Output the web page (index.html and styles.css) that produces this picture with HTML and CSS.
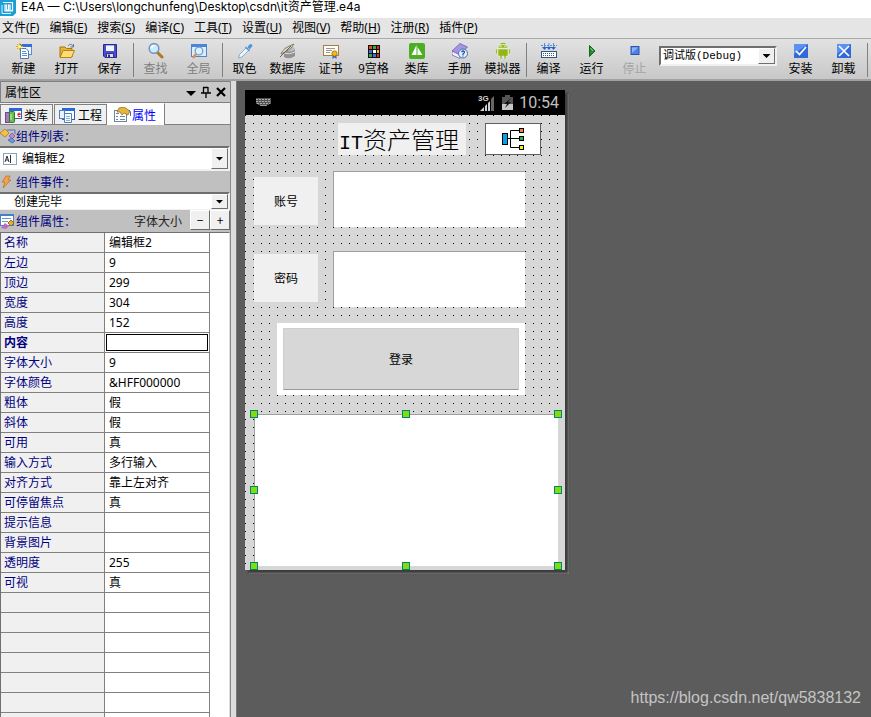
FILE: index.html
```html
<!DOCTYPE html>
<html lang="zh-CN">
<head>
<meta charset="utf-8">
<title>E4A</title>
<link rel="stylesheet" href="styles.css">
</head>
<body>
<header class="titlebar">
  <svg class="logo" width="16" height="16" viewBox="0 0 16 16"><path d="M0 0H16V13L13 16H0Z" fill="#1b9fd6"/><path d="M3 2.500H12.500V10.500H10V5H8.500V10H6.500V5H5V11H13" fill="none" stroke="#fff" stroke-width="1.200"/><path d="M2 5V13.500H11" fill="none" stroke="#d5f2ff"/></svg>
  <span>E4A — C:\Users\longchunfeng\Desktop\csdn\it资产管理.e4a</span>
</header>
<nav class="menubar">
  <a href="#">文件(<u>F</u>)</a><a href="#">编辑(<u>E</u>)</a><a href="#">搜索(<u>S</u>)</a><a href="#">编译(<u>C</u>)</a><a href="#">工具(<u>T</u>)</a><a href="#">设置(<u>U</u>)</a><a href="#">视图(<u>V</u>)</a><a href="#">帮助(<u>H</u>)</a><a href="#">注册(<u>R</u>)</a><a href="#">插件(<u>P</u>)</a>
</nav>
<div class="toolbar">
  <button class="tool"><svg viewBox="0 0 16 16"><rect x="4.500" y="1.500" width="11" height="10" fill="#eef5ff" stroke="#5b8ad0"/><path d="M4 1H16V4H4Z" fill="#3a6fd0"/><path d="M4.500 5.500H10L12.500 8V15.500H4.500Z" fill="#fff" stroke="#5577aa"/><path d="M6 8.500H10M6 10.500H11M6 12.500H11" stroke="#5c8fdc"/><path d="M3.500 0V7M0 3.500H7M1 1L6 6M6 1L1 6" stroke="#e6b400"/><circle cx="3.500" cy="3.500" r="1.500" fill="#fff6a8"/></svg>新建</button>
  <button class="tool"><svg viewBox="0 0 16 16"><path d="M1 14V4H6L7.500 5.500H13V14Z" fill="#e9b23a" stroke="#a97408"/><path d="M1 14.500L4 7.500H15.500L12.500 14.500Z" fill="#ffdd75" stroke="#b98210"/><path d="M9 3C11 .5 13 1 14 3.500M14.500 1V4H11.500" fill="none" stroke="#5b7896"/></svg>打开</button>
  <button class="tool"><svg viewBox="0 0 16 16"><path d="M1.500 1.500H14.500V14.500H3L1.500 13Z" fill="#4a4fd0" stroke="#28288f"/><path d="M4 2H12V8H4Z" fill="#f2f4ff"/><path d="M4 2H12V3H4Z" fill="#9cb2f0"/><path d="M4.500 10.500H11.500V14.500H4.500Z" fill="#dfe1ea" stroke="#30308a"/><path d="M6 11.500H8V14H6Z" fill="#30308a"/></svg>保存</button>
  <span class="sep"></span>
  <button class="tool" disabled><svg viewBox="0 0 16 16"><path d="M9 9L14 14" stroke="#b07828" stroke-width="3" stroke-linecap="round"/><circle cx="6" cy="5.500" r="4.800" fill="#cfeaff" stroke="#7295bb" stroke-width="1.500"/><path d="M3.500 5Q4 2.500 6.500 2.500" fill="none" stroke="#fff" stroke-width="1.500"/></svg>查找</button>
  <button class="tool" disabled><svg viewBox="0 0 16 16"><rect x=".5" y="1.500" width="15" height="12" fill="#dcebfd" stroke="#5384ca"/><path d="M0 1H16V4H0Z" fill="#4b83d8"/><circle cx="8" cy="8" r="3.800" fill="#d7f1ff" stroke="#7a9fc0" stroke-width="1.300"/><path d="M5 11L2 15" stroke="#d2905c" stroke-width="2.500"/></svg>全局</button>
  <span class="sep"></span>
  <button class="tool"><svg viewBox="0 0 16 16"><path d="M1.500 15L2.500 11.500L9 5L11.500 7.500L5 14Z" fill="#eaf6ff" stroke="#8babc3"/><path d="M8.500 4L12.500 8" stroke="#5b93d0" stroke-width="1.500"/><path d="M10.500 4L12.500 1.500Q15 0 15.500 3L12.500 6.500Z" fill="#4c94dc"/></svg>取色</button>
  <button class="tool"><svg viewBox="0 0 16 16"><path d="M4 6V14Q9 17 15 13V6Z" fill="#929292"/><ellipse cx="9.500" cy="6" rx="5.500" ry="2.500" fill="#bdbdbd"/><path d="M4 10Q9 12 15 9" stroke="#ddd" fill="none"/><path d="M1 11Q3 5 14 1Q12 6 5 9Z" fill="#dddccb" stroke="#6c695e" stroke-width=".8"/><path d="M0 14L11 3" stroke="#77603f"/></svg>数据库</button>
  <button class="tool"><svg viewBox="0 0 16 16"><rect x=".5" y="2.500" width="15" height="10" fill="#fffef6" stroke="#a87b43"/><path d="M3 5.500H12M3 7.500H9M3 9.500H7" stroke="#999"/><path d="M9.500 11V16L11.500 14.500L13.500 16V11" fill="#256dbb"/><circle cx="11.500" cy="10.500" r="2.600" fill="#f4b91f" stroke="#b97800"/></svg>证书</button>
  <button class="tool"><svg viewBox="0 0 16 16"><path d="M2 2H14V15H2Z" fill="#111"/><path d="M3 3H6V6H3Z" fill="#e84d20"/><path d="M7 3H10V6H7ZM3 11H6V14H3Z" fill="#37ad3d"/><path d="M11 3H13V6H11ZM11 11H13V14H11Z" fill="#e32c25"/><path d="M3 7H6V10H3ZM7 11H10V14H7Z" fill="#3c73de"/><path d="M7 7H10V10H7Z" fill="#fff"/><path d="M11 7H13V10H11Z" fill="#f4c51b"/></svg>9宫格</button>
  <button class="tool"><svg viewBox="0 0 16 16"><rect x="0" y="0" width="16" height="16" rx="2" fill="#4cae22"/><path d="M7.500 2V12H2.500ZM8.500 4L13.500 12H8.500Z" fill="#fff"/></svg>类库</button>
  <button class="tool"><svg viewBox="0 0 16 16"><path d="M0 8L8 .5L15.500 4L8 12Z" fill="#a696e1" stroke="#6655aa" stroke-width=".7"/><path d="M0 8V12L8 15.500V12Z" fill="#f3efff" stroke="#6655aa" stroke-width=".7"/><circle cx="11" cy="10.500" r="4.500" fill="#e2f1ff" stroke="#436eb5"/><path d="M9.500 9Q11 7 12.500 9Q12.500 10 11 11V12" fill="none" stroke="#2858a3" stroke-width="1.300"/><path d="M10.400 13H11.600" stroke="#2858a3"/></svg>手册</button>
  <button class="tool"><svg viewBox="0 0 16 16"><path d="M5 0L6 2Q8 1 10 2L11 0M3 5Q4 1.500 8 1.500Q12 1.500 13 5ZM3 6H13V13H11V16H9V13H7V16H5V13H3ZM.5 6H2.300V11H.5ZM13.700 6H15.500V11H13.700Z" fill="#92b51a" stroke="#f4f8df" stroke-width=".5"/><path d="M5.500 3.500H6.500M9.500 3.500H10.500" stroke="#fff"/></svg>模拟器</button>
  <span class="sep"></span>
  <button class="tool"><svg viewBox="0 0 16 16"><path d="M3.500 0V5M8 0V5M12.500 0V5M0 2.500H16" stroke="#5e8bc9" stroke-dasharray="2 1"/><path d="M1 4H6L3.500 7ZM5.500 4H10.500L8 7ZM10 4H15L12.500 7Z" fill="#2365d1"/><rect x=".5" y="8.500" width="15" height="6" fill="#fff" stroke="#365583"/><path d="M2 10.500H14M2 12.500H14" stroke="#365583" stroke-dasharray="1 1"/></svg>编译</button>
  <button class="tool"><svg viewBox="0 0 16 16"><path d="M5.500 2.500L11 8L5.500 13.500Z" fill="#238c2c" stroke="#17651d"/><path d="M6.500 5L9 8" stroke="#8ed388"/></svg>运行</button>
  <button class="tool pale" disabled><svg viewBox="0 0 16 16"><rect x="4" y="3.500" width="8" height="8" fill="#4c82e8" stroke="#2856a8"/><path d="M5 4.500H11L5 10Z" fill="#8db3fa"/></svg>停止</button>
  <div class="combo build"><select aria-label="编译版本"><option>调试版(Debug)</option></select><i></i></div>
  <button class="tool"><svg viewBox="0 0 16 16"><path d="M1 1H15V15H1Z" fill="#316ad8"/><path d="M1 1H15L1 11Z" fill="#5b91f0"/><path d="M3 8L6.500 11.500L13 4" fill="none" stroke="#fff" stroke-width="1.700"/></svg>安装</button>
  <button class="tool"><svg viewBox="0 0 16 16"><path d="M1 1H15V15H1Z" fill="#316ad8"/><path d="M1 1H15L1 11Z" fill="#5b91f0"/><path d="M3 3L13 13M13 3L3 13" fill="none" stroke="#fff" stroke-width="1.700"/></svg>卸载</button>
  <span class="sep"></span>
</div>
<div class="main">
  <aside class="panel">
    <div class="panel-head"><span>属性区</span>
      <button aria-label="菜单"><svg width="10" height="12" viewBox="0 0 10 12"><path d="M0 5H10L5 10Z"/></svg></button>
      <button aria-label="固定"><svg width="10" height="12" viewBox="0 0 10 12"><path d="M2.500 1V6.500M2 1.500H7M7 1V7M0 7H10M5 7V12" fill="none" stroke="#000" stroke-width="1.300"/></svg></button>
      <button aria-label="关闭"><svg width="10" height="12" viewBox="0 0 10 12"><path d="M1 2L9 10M9 2L1 10" stroke="#000" stroke-width="2.200"/></svg></button>
    </div>
    <div class="tabs" role="tablist">
      <button role="tab" aria-selected="false"><svg width="17" height="16" viewBox="0 0 17 16"><rect x="4.500" y="1.500" width="12" height="10" fill="#fff" stroke="#315fbd"/><path d="M4 1H17V4H4Z" fill="#2868dc"/><path d="M13 7.500H15.500Q15 5.500 13.500 6Q12 8 13.500 9.500H15.500" fill="none" stroke="#e02020"/><rect x=".5" y="5.500" width="4" height="10" fill="#a776bd" stroke="#714785"/><rect x="4.500" y="4.500" width="5" height="11" rx="1" fill="#69bd50" stroke="#317a27"/><path d="M6 7V13" stroke="#c9f5b8"/></svg>类库</button>
      <button role="tab" aria-selected="false"><svg width="17" height="16" viewBox="0 0 17 16"><rect x="3.500" y="1.500" width="12" height="11" fill="#fff" stroke="#315fbd"/><path d="M3 1H16V4H3Z" fill="#2868dc"/><rect x=".5" y="3.500" width="5" height="8" fill="#e8f3ff" stroke="#527fb8"/><path d="M5.500 6.500H12.500V15.500H5.500Z" fill="#f7faff" stroke="#527fb8"/><path d="M7 9.500H11M7 11.500H11M7 13.500H11" stroke="#8baddc"/></svg>工程</button>
      <button role="tab" aria-selected="true" class="active"><svg width="17" height="16" viewBox="0 0 17 16"><rect x=".5" y="3.500" width="12" height="11" fill="#fff" stroke="#71869f"/><path d="M2 6.500H5M2 9.500H4M6 9.500H11M2 12.500H4M6 12.500H11" stroke="#6585aa"/><path d="M5 1L10 0L16 4L14 8L10 6L8 8L6 5H3Z" fill="#e4b73a" stroke="#8e6414" stroke-width=".7"/><path d="M15 3L16.500 5V9" fill="none" stroke="#446aa0"/></svg>属性</button>
    </div>
    <label class="section" for="components"><svg width="16" height="16" viewBox="0 0 16 16"><path d="M0 5L5 1L9 5L5 9Z" fill="#f4c240" stroke="#a17219" stroke-width=".7"/><path d="M7 2H15V6" fill="none" stroke="#4773b7"/><path d="M9 8L12 5L15 8L12 11Z" fill="#c883d9" stroke="#79498f" stroke-width=".7"/><path d="M8 12L12 10L15 13L12 15Z" fill="#5f9cec" stroke="#325f9e" stroke-width=".7"/></svg>组件列表：</label>
    <div class="combo comp"><svg class="field-icon" width="14" height="12" viewBox="0 0 14 12"><rect x=".5" y=".5" width="13" height="11" fill="#fff" stroke="#86a5c5"/><path d="M2 9L4 3L6 9M3 7H5M7.500 2V10" stroke="#333" fill="none"/></svg><select id="components"><option>编辑框2</option></select><i></i></div>
    <label class="section" for="events"><svg width="16" height="16" viewBox="0 0 16 16"><path d="M6 2H10L8 6H11L3 14L5 8H2Z" fill="#f3a344" stroke="#b76a31" stroke-width=".7"/></svg>组件事件：</label>
    <div class="combo event"><select id="events"><option>创建完毕</option></select><i></i></div>
    <div class="section props-head"><svg width="16" height="16" viewBox="0 0 16 16"><rect x=".5" y="1.500" width="13" height="11" fill="#fff" stroke="#5480bd"/><path d="M0 1H14V3H0Z" fill="#457dd1"/><path d="M2 5.500H11M2 8.500H8" stroke="#7395c1"/><path d="M1 15L5 10L9 13L6 16Z" fill="#bd69c7"/><path d="M8 10L11 7L14 10L11 13Z" fill="#e9ae35" stroke="#966916"/></svg><span>组件属性：</span><span class="size-label">字体大小</span><button>−</button><button>+</button></div>
    <div class="grid-wrap">
      <table class="props">
        <tbody>
        <tr><th scope="row">名称</th><td>编辑框2</td></tr>
        <tr><th scope="row">左边</th><td>9</td></tr>
        <tr><th scope="row">顶边</th><td>299</td></tr>
        <tr><th scope="row">宽度</th><td>304</td></tr>
        <tr><th scope="row">高度</th><td>152</td></tr>
        <tr class="current"><th scope="row"><label for="content">内容</label></th><td><input id="content" type="text"></td></tr>
        <tr><th scope="row">字体大小</th><td>9</td></tr>
        <tr><th scope="row">字体颜色</th><td>&amp;HFF000000</td></tr>
        <tr><th scope="row">粗体</th><td>假</td></tr>
        <tr><th scope="row">斜体</th><td>假</td></tr>
        <tr><th scope="row">可用</th><td>真</td></tr>
        <tr><th scope="row">输入方式</th><td>多行输入</td></tr>
        <tr><th scope="row">对齐方式</th><td>靠上左对齐</td></tr>
        <tr><th scope="row">可停留焦点</th><td>真</td></tr>
        <tr><th scope="row">提示信息</th><td></td></tr>
        <tr><th scope="row">背景图片</th><td></td></tr>
        <tr><th scope="row">透明度</th><td>255</td></tr>
        <tr><th scope="row">可视</th><td>真</td></tr>
        <tr><th></th><td></td></tr><tr><th></th><td></td></tr><tr><th></th><td></td></tr><tr><th></th><td></td></tr><tr><th></th><td></td></tr><tr><th></th><td></td></tr><tr><th></th><td></td></tr>
        </tbody>
      </table>
    </div>
  </aside>
  <main class="workspace">
    <div class="phone">
      <div class="status">
        <svg class="kbd" width="15" height="9" viewBox="0 0 15 9"><path d="M0 0H15V6H13V7H2V6H0Z" fill="#555"/><path d="M0 1.500H15M0 3.500H15M1 5.500H14" stroke="#aaa" stroke-dasharray="2 1"/><path d="M4 7.500H11" stroke="#999"/></svg>
        <svg width="18" height="18" viewBox="0 0 18 18"><text x="0" y="7" class="net">3G</text><path d="M2 17L6 13V17ZM7 12L9 10V17H7ZM10 9L12 7V17H10Z" fill="#d0d0d0"/><path d="M13 5L16 2V17H13Z" fill="#666"/></svg>
        <svg width="11" height="16" viewBox="0 0 11 16"><path d="M3 0H8V2H11V15H0V2H3Z" fill="#555"/><path d="M0 9H11V15H0Z" fill="#c5c5c5"/><path d="M9 3L2 9H5L3 13L9 7H6Z" fill="#111"/></svg>
        <time>10:54</time>
      </div>
      <div class="form">
        <div class="item app-title"><span>IT</span>资产管理</div>
        <div class="item tree"><svg width="22" height="22" viewBox="0 0 22 22"><path d="M6 10.500H17M17 2.500H8.500V19.500H17" fill="none" stroke="#000"/><rect x=".5" y="5.500" width="5" height="11" fill="#00a2e8" stroke="#000"/><rect x="17.500" y=".5" width="4" height="4" fill="#ff7f27" stroke="#000"/><rect x="17.500" y="8.500" width="4" height="4" fill="#22b14c" stroke="#000"/><rect x="17.500" y="17.500" width="4" height="4" fill="#fff200" stroke="#000"/></svg></div>
        <label class="item caption account" for="account">账号</label>
        <input class="item edit account-edit" id="account" type="text">
        <label class="item caption password" for="password">密码</label>
        <input class="item edit password-edit" id="password" type="text">
        <div class="item login"><button>登录</button></div>
        <div class="item selected"><textarea aria-label="编辑框2"></textarea><b class="n w"></b><b class="n c"></b><b class="n e"></b><b class="m w"></b><b class="m e"></b><b class="s w"></b><b class="s c"></b><b class="s e"></b></div>
      </div>
    </div>
    <div class="watermark">https://blog.csdn.net/qw5838132</div>
  </main>
</div>
</body>
</html>
```
FILE: styles.css
```css
* { box-sizing: border-box; }
body {
  margin: 0;
  height: 100vh;
  display: flex;
  flex-direction: column;
  overflow: hidden;
  background: #fff;
  color: #000;
  font: 12px/16px "Noto Sans", "Noto Sans CJK SC", sans-serif;
}
button, select, input, textarea { font: inherit; color: inherit; margin: 0; border-radius: 0; }
button { padding: 0; border: 0; background: none; }
svg { display: block; flex: none; }

.titlebar { height: 18px; display: flex; align-items: flex-start; gap: 5px; font-family: Inter, "Noto Sans CJK SC", sans-serif; line-height: 14px; white-space: nowrap; }
.menubar { height: 20px; display: flex; align-items: center; gap: 10px; padding-left: 2px; background: #e5e5e5; }
.menubar a { color: #000; text-decoration: none; white-space: nowrap; }

.toolbar {
  height: 43px;
  display: flex;
  align-items: flex-start;
  padding: 4px 0 0 2px;
  border-top: 1px solid #aaa;
  border-bottom: 2px solid #a0a0a0;
  background: linear-gradient(#e2e2e2, #c8c8c8);
  font-family: "Noto Sans CJK SC", sans-serif;
}
.tool { width: 43px; flex: none; display: flex; flex-direction: column; align-items: center; white-space: nowrap; }
.tool svg { width: 16px; height: 16px; margin-bottom: 1px; }
.tool:disabled { color: #808080; }
.tool.pale:disabled { color: #a4a4a4; }
.sep { width: 1px; height: 34px; margin-left: 2px; background: #808080; }

.combo { position: relative; display: flex; border: 2px solid; border-color: #6e6e6e #f0f0f0 #f0f0f0 #6e6e6e; background: #fff; }
.combo select { appearance: none; flex: 1; min-width: 0; border: 0; padding: 0 0 0 2px; background: transparent; outline: 0; }
.combo i {
  position: absolute;
  top: 0; right: 0; bottom: 0;
  width: 17px;
  border: 1px solid;
  border-color: #fff #6e6e6e #6e6e6e #fff;
  background: #f0f0f0;
  pointer-events: none;
}
.combo i::after { content: ""; position: absolute; inset: 0; margin: auto; width: 8px; height: 4px; background: #000; clip-path: polygon(0 0, 100% 0, 50% 100%); }
.build { width: 118px; height: 20px; margin: 3px 2px 0 3px; font-family: "Liberation Mono", "Noto Sans CJK SC", monospace; font-size: 11px; }

.main { flex: 1; min-height: 0; display: flex; background: #dcdcdc; }
.panel { width: 231px; flex: none; display: flex; flex-direction: column; border-right: 1px solid #888; background: #f0f0f0; font-family: "Noto Sans CJK SC", sans-serif; }
.panel-head { height: 22px; flex: none; display: flex; align-items: center; gap: 5px; padding: 0 4px; border: 1px solid #808080; border-right: 0; background: #c8c8c8; }
.panel-head span { flex: 1; }
.tabs { height: 22px; flex: none; display: flex; align-items: flex-end; border-bottom: 1px solid #808080; }
.tabs button { height: 20px; width: 53px; display: flex; align-items: center; gap: 2px; padding-left: 4px; border: 1px solid #808080; border-bottom: 0; margin-right: 1px; }
.tabs .active { width: 58px; height: 22px; padding-left: 6px; gap: 1px; margin: 0 0 -1px -1px; border-color: #fff #808080 #fff #fff; background: #fff; color: #00f; }
.section { height: 21px; flex: none; display: flex; align-items: center; background: #c0c0c0; color: #000080; }
.comp { height: 25px; align-items: center; flex: none; border-left: 0; }
.comp select { padding-left: 5px; }
.field-icon { margin-left: 3px; }
.event { height: 18px; flex: none; border-left: 0; border-bottom-width: 1px; }
.event select { padding-left: 14px; }
.combo.comp, .combo.event { font-family: "Noto Sans", "Noto Sans CJK SC", sans-serif; }
.props-head { align-items: stretch; height: 22px; line-height: 21px; }
.props-head svg { align-self: center; }
.size-label { margin-left: auto; margin-right: 8px; color: #222; }
.props-head button { width: 20px; height: 20px; color: #000; line-height: 16px; border: 1px solid; border-color: #fff #696969 #696969 #fff; background: #f0f0f0; }

.grid-wrap { flex: 1; min-height: 0; overflow: hidden; border-top: 1px solid #707070; border-left: 1px solid #707070; border-right: 1px solid #ddd; background: #fff; }
.props { width: 209px; table-layout: fixed; border-collapse: separate; border-spacing: 0; font-family: "Noto Sans", "Noto Sans CJK SC", sans-serif; }
.props th, .props td { height: 20px; padding: 0 0 0 3px; border-right: 1px solid #808080; border-bottom: 1px solid #808080; text-align: left; font-weight: normal; line-height: 16px; }
.props th { width: 104px; background: #f0f0f0; color: #000080; }
.props td { padding-left: 4px; }
.props .current th { font-weight: bold; }
.props .current td { padding: 0 1px; }
.props input { display: block; width: 100%; height: 17px; border: 1px solid #000; padding: 0 2px; outline: 0; }

.workspace { position: relative; flex: 1; min-width: 0; margin-left: 5px; padding: 9px 0 0 8px; border-left: 1px solid #777; background: #5c5c5c; }
.phone { width: 320px; box-shadow: 3px 3px 2px #3c3c3c, 4px 4px 0 #7d7d7d; }
.status { height: 25px; display: flex; align-items: center; gap: 6px; padding: 0 6px 0 11px; background: #000; color: #c0c0c0; font: 16px/24px Roboto, sans-serif; }
.kbd { margin-right: auto; }
.net { font: bold 8px "Liberation Sans", sans-serif; fill: #d0d0d0; }

/* Designer surface: components sit at their own left/top properties. */
.form {
  position: relative;
  height: 455px;
  background:
    linear-gradient(90deg, transparent 1px, #d7d7d7 1px) 0 0 / 8px 8px,
    linear-gradient(#000 1px, #d7d7d7 1px) 0 0 / 8px 8px;
  font-family: "Noto Sans CJK SC", sans-serif;
}
.item { position: absolute; }
.app-title { left: 93px; top: 8px; width: 128px; height: 32px; padding-left: 1px; background: #f0f0f0; font-size: 24px; font-weight: 300; line-height: 32px; white-space: nowrap; }
.app-title span { font-family: "Liberation Mono", monospace; font-size: 20px; }
.tree { left: 240px; top: 8px; width: 56px; height: 32px; display: grid; place-items: center; border: 1px solid #606060; background: #fff; }
.caption { left: 9px; width: 64px; height: 48px; display: grid; place-items: center; background: #f0f0f0; }
.account { top: 62px; }
.password { top: 139px; }
.edit, textarea { border: 0 solid #a0a0a0; border-width: 1px 0 0 1px; background: #fff; outline: 0; }
.edit { left: 88px; width: 192px; height: 56px; }
.account-edit { top: 56px; }
.password-edit { top: 136px; }
.login { left: 32px; top: 208px; width: 248px; height: 72px; padding: 5px 6px; background: #fff; }
.login button { display: block; width: 100%; height: 62px; border: 1px solid #cfcfcf; border-bottom-color: #999; border-radius: 1px; background: #d7d7d7; }
.selected { left: 9px; top: 299px; width: 304px; height: 152px; }
textarea { display: block; width: 100%; height: 100%; resize: none; }
.selected b { position: absolute; width: 8px; height: 8px; border: 1px solid #008080; background: #80e000; }
.n { top: -4px; }
.m { top: 72px; }
.s { bottom: -4px; }
.w { left: -4px; }
.c { left: 148px; }
.e { right: -4px; }
.watermark { position: absolute; right: 10px; bottom: 9px; color: #c4c4c4; font: 16px/20px "Liberation Sans", sans-serif; }
```
